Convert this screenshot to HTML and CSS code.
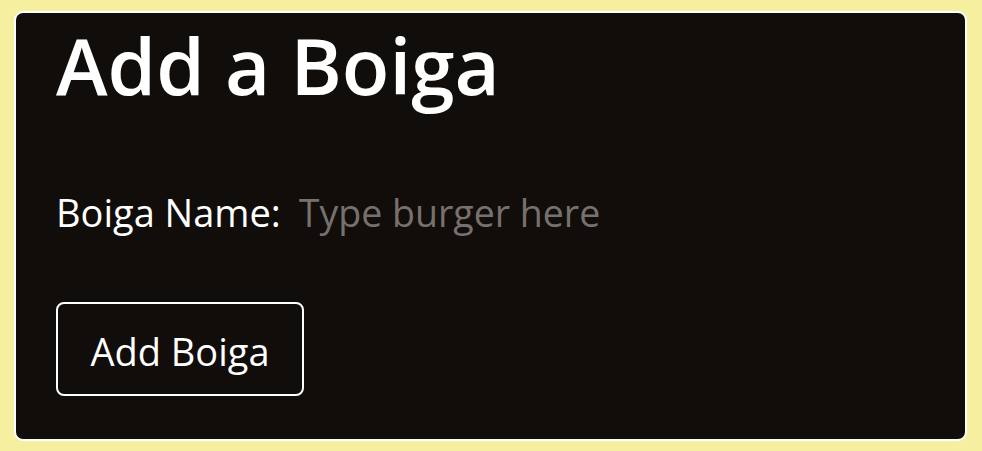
FILE: index.html
```html
<!DOCTYPE html>
<html>
<head>
<meta charset="utf-8">
<link rel="stylesheet" href="styles.css">
</head>
<body>
<div class="card">
  <h1 class="title">Add a Boiga</h1>
  <form class="form">
    <div class="field">
      <label class="label" for="name">Boiga Name:</label>
      <input class="input" id="name" type="text" placeholder="Type burger here">
    </div>
    <button class="btn" type="button">Add Boiga</button>
  </form>
</div>
</body>
</html>
```
FILE: styles.css
```css
html, body {
  margin: 0;
  height: 100%;
}
body {
  background: #f6efa0;
  padding: 11px 15px 10px 14px;
  box-sizing: border-box;
  font-family: "Open Sans", "Noto Sans", sans-serif;
}
.card {
  height: 100%;
  box-sizing: border-box;
  background: #110d0a;
  border: 2px solid #ffffff;
  border-radius: 9px;
  padding: 0 40px;
  color: #ffffff;
}
.title {
  margin: 0;
  font-size: 78px;
  font-weight: 600;
  line-height: 104px;
  letter-spacing: 0;
}
.form {
  margin: 0;
}
.field {
  display: flex;
  align-items: center;
  gap: 18px;
  margin-top: 70px;
  height: 50px;
}
.label {
  font-size: 38px;
  color: #ffffff;
}
.input {
  background: transparent;
  border: none;
  outline: none;
  padding: 0;
  font-family: inherit;
  font-size: 37.5px;
  color: #ffffff;
  width: 420px;
}
.input::placeholder {
  color: #77716d;
}
.btn {
  display: block;
  margin-top: 65px;
  width: 248px;
  height: 94px;
  background: transparent;
  border: 2px solid #ffffff;
  border-radius: 8px;
  color: #ffffff;
  font-family: inherit;
  font-size: 38px;
  padding: 4px 0 0;
}
```
